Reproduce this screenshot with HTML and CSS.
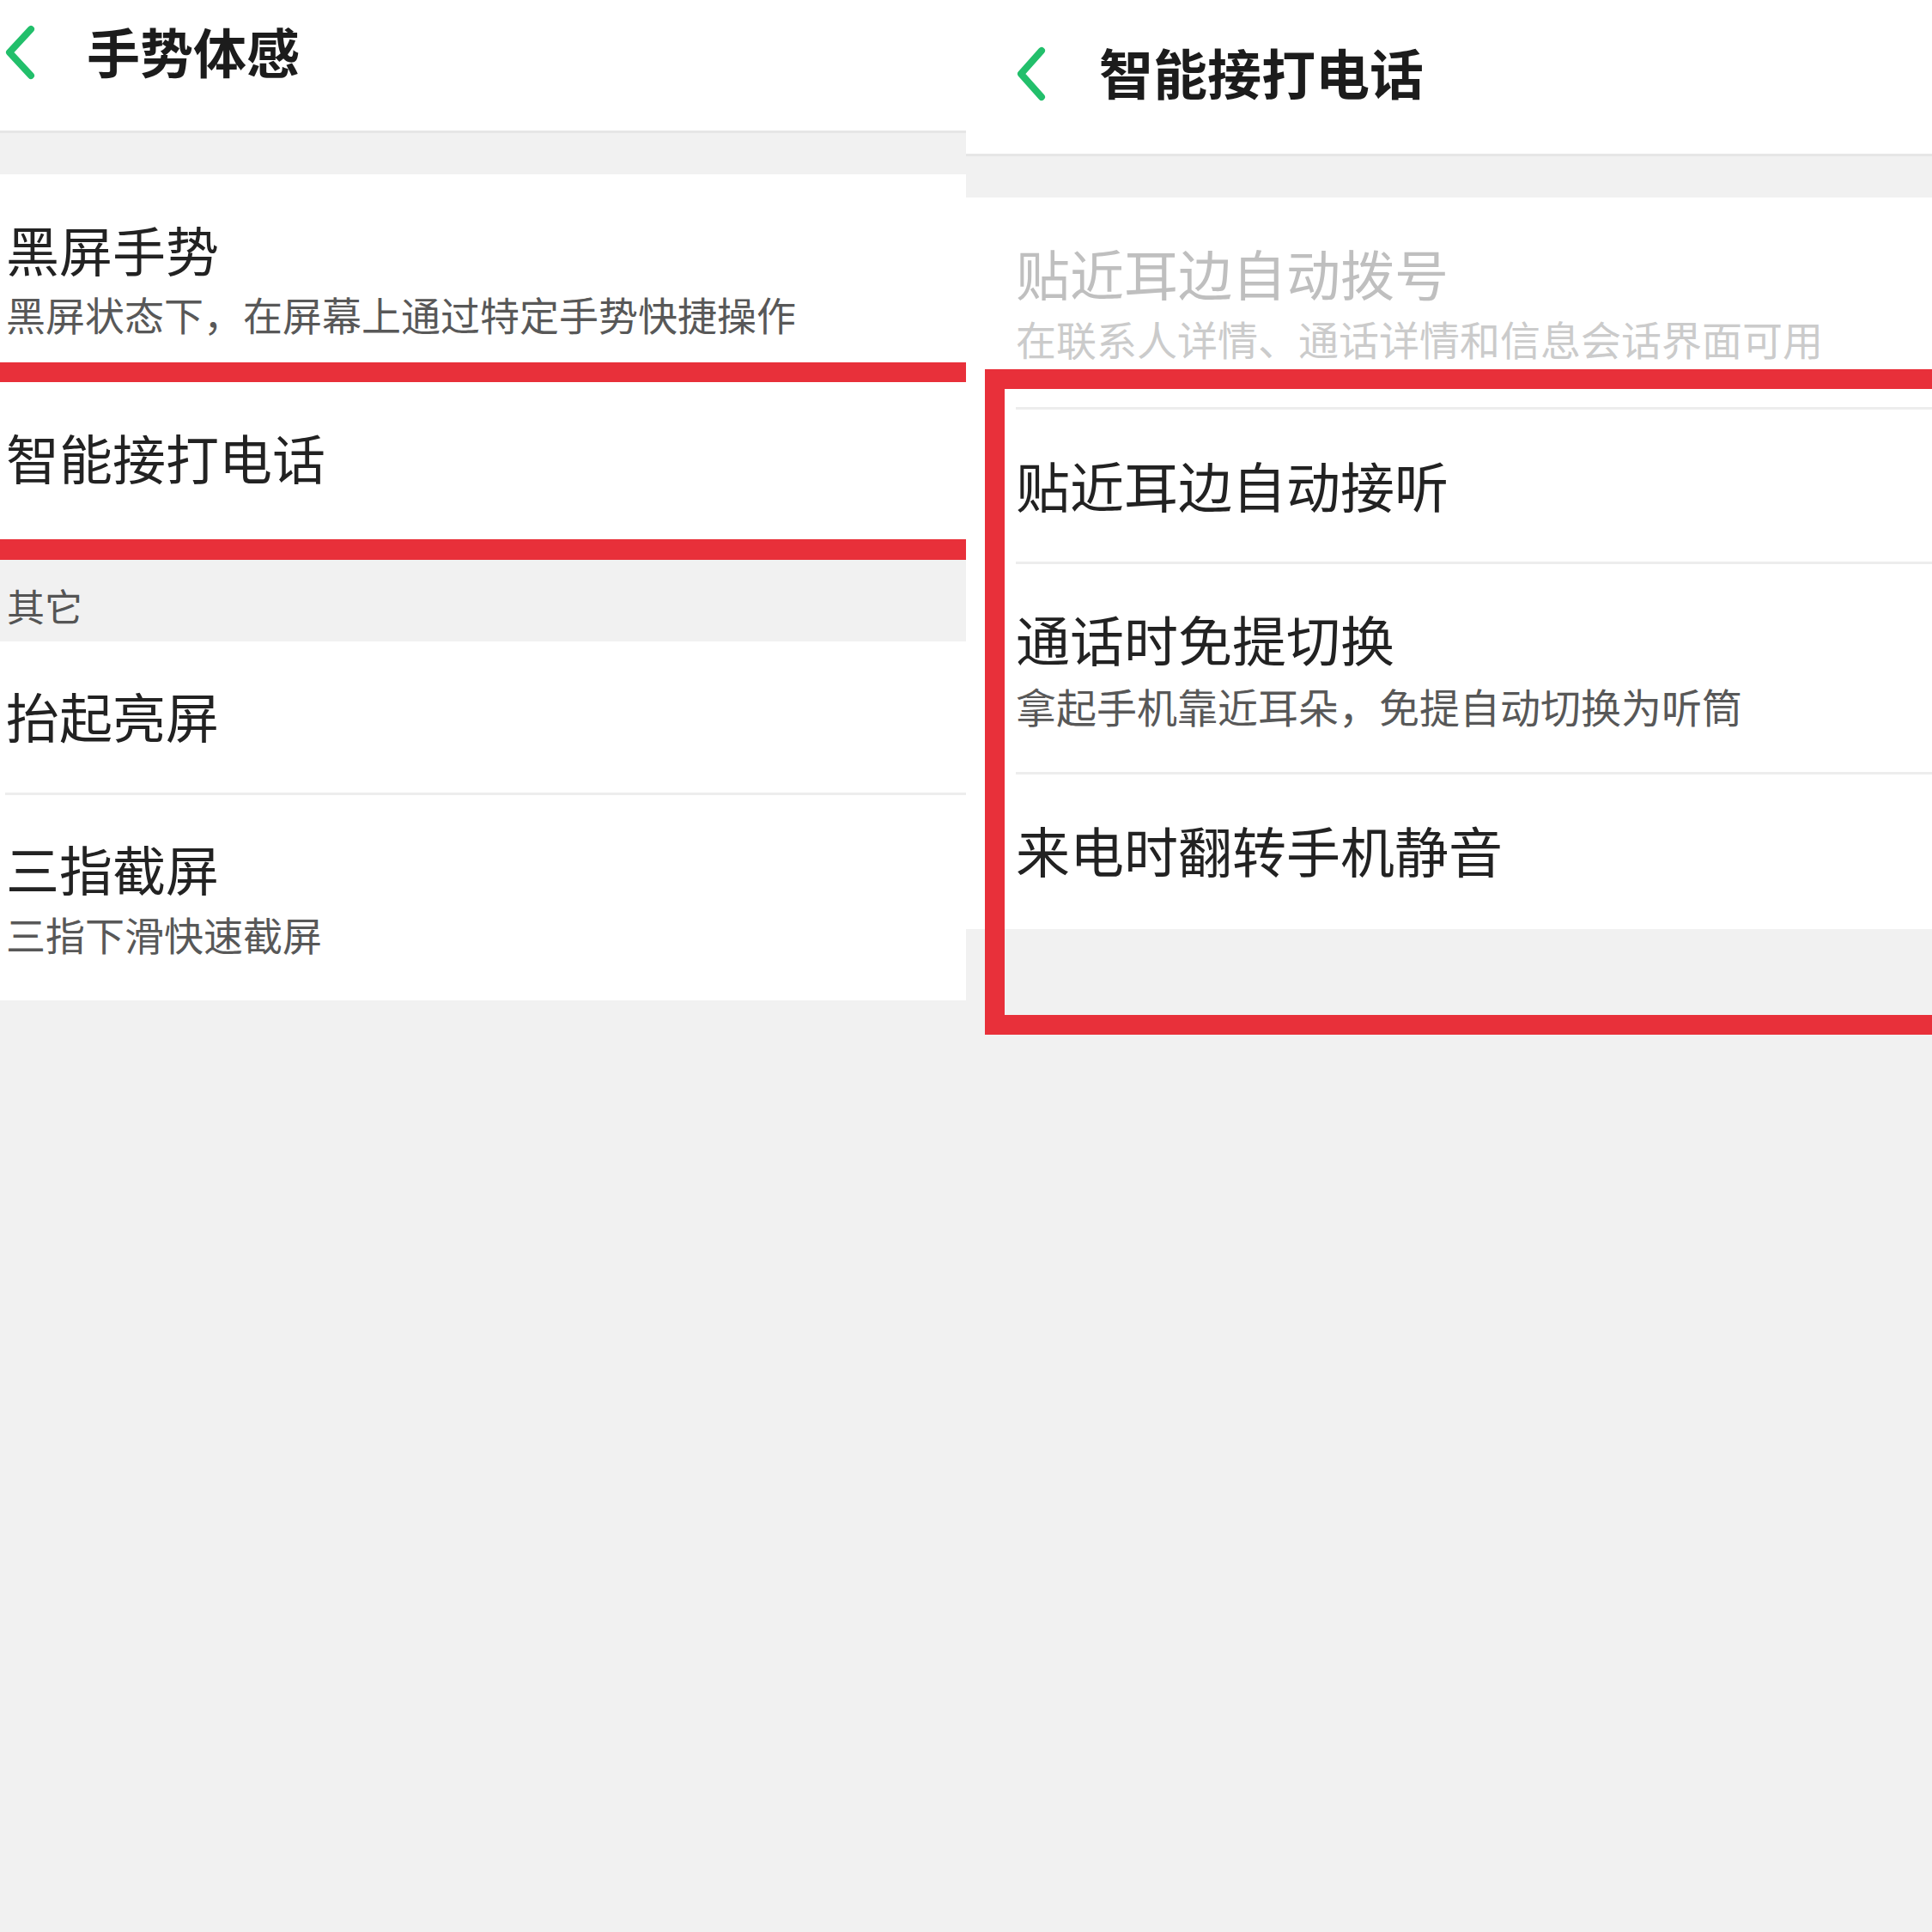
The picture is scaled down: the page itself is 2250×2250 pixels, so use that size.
FILE: index.html
```html
<!DOCTYPE html>
<html lang="zh-CN">
<head>
<meta charset="utf-8">
<title>手势体感 / 智能接打电话</title>
<link rel="stylesheet" href="styles.css">
</head>
<body>
<div class="screens">
  <section class="panel panel-left">
    <header class="topbar topbar-left">
      <svg class="back back-left" width="44" height="100" viewBox="0 0 44 100"><polyline points="36,34 11,61 36,88" /></svg>
      <h1 class="page-title title-left">手势体感</h1>
    </header>
    <div class="gap"></div>

    <div class="row row-l1">
      <div class="row-inner">
        <div class="item-title">黑屏手势</div>
        <div class="item-sub">黑屏状态下，在屏幕上通过特定手势快捷操作</div>
      </div>
    </div>
    <div class="row row-l2 marked">
      <div class="row-inner">
        <div class="item-title">智能接打电话</div>
      </div>
    </div>
    <div class="section-head">其它</div>
    <div class="row row-l3">
      <div class="row-inner sep">
        <div class="item-title">抬起亮屏</div>
      </div>
    </div>
    <div class="row row-l4">
      <div class="row-inner">
        <div class="item-title">三指截屏</div>
        <div class="item-sub">三指下滑快速截屏</div>
      </div>
    </div>
  </section>

  <section class="panel panel-right">
    <header class="topbar topbar-right">
      <svg class="back back-right" width="44" height="140" viewBox="0 0 44 140"><polyline points="32,59 8,86 32,113" /></svg>
      <h1 class="page-title title-right">智能接打电话</h1>
    </header>
    <div class="gap"></div>

    <div class="row rrow rrow-1">
      <div class="row-inner sep">
        <div class="item-title big disabled">贴近耳边自动拨号</div>
        <div class="item-sub wide disabled-sub">在联系人详情、通话详情和信息会话界面可用</div>
      </div>
    </div>
    <div class="row rrow rrow-2">
      <div class="row-inner sep">
        <div class="item-title big">贴近耳边自动接听</div>
      </div>
    </div>
    <div class="row rrow rrow-3">
      <div class="row-inner sep">
        <div class="item-title big">通话时免提切换</div>
        <div class="item-sub wide">拿起手机靠近耳朵，免提自动切换为听筒</div>
      </div>
    </div>
    <div class="row rrow rrow-4">
      <div class="row-inner">
        <div class="item-title big">来电时翻转手机静音</div>
      </div>
    </div>

    <div class="highlight-box"></div>
  </section>
</div>
</body>
</html>
```

FILE: styles.css
```css
html, body {
  margin: 0;
  padding: 0;
}

body {
  width: 2250px;
  height: 2250px;
  overflow: hidden;
  background: #f1f1f1;
  font-family: "Noto Sans CJK SC", "Noto Sans", sans-serif;
  color: #222222;
}

.screens {
  display: flex;
  align-items: flex-start;
  width: 2250px;
}

.panel {
  width: 1125px;
  flex: 0 0 1125px;
  display: flex;
  flex-direction: column;
}

.panel-right {
  position: relative;
  overflow: hidden;
  height: 1300px;
}

/* ---------- top bars ---------- */
.topbar {
  display: flex;
  align-items: flex-start;
  background: #ffffff;
  border-bottom: 3px solid #e6e6e6;
  box-sizing: content-box;
}

.topbar-left {
  height: 152px;
}

.topbar-right {
  height: 179px;
  padding-left: 56px;
}

.back {
  flex: 0 0 auto;
  display: block;
}

.back polyline {
  fill: none;
  stroke: #22bf6b;
  stroke-width: 8;
  stroke-linecap: round;
  stroke-linejoin: round;
}

.page-title {
  margin: 0;
  font-weight: 700;
  color: #1c1c1c;
  white-space: nowrap;
}

.title-left {
  font-size: 62px;
  line-height: 62px;
  margin-left: 57px;
  padding-top: 28px;
}

.title-right {
  font-size: 63px;
  line-height: 63px;
  margin-left: 55px;
  padding-top: 51px;
}

.gap {
  height: 48px;
}

/* ---------- rows ---------- */
.row {
  background: #ffffff;
  box-sizing: border-box;
  padding-left: 7px;
}

.row-inner {
  display: flex;
  flex-direction: column;
  box-sizing: border-box;
  height: 100%;
}

.sep {
  border-bottom: 3px solid #ededed;
}

.item-title {
  font-size: 62px;
  line-height: 62px;
  color: #222222;
  white-space: nowrap;
}

.item-title.big {
  font-size: 63px;
  line-height: 63px;
}

.item-sub {
  font-size: 46px;
  line-height: 46px;
  color: #585858;
  white-space: nowrap;
}

.item-sub.wide {
  font-size: 47px;
  line-height: 47px;
}

.disabled {
  color: #bfbfbf;
}

.disabled-sub {
  color: #cbcbcb;
}

/* left panel rows */
.row-l1 {
  height: 219px;
}
.row-l1 .row-inner {
  padding-top: 56px;
}
.row-l1 .item-sub {
  margin-top: 21px;
}

.marked {
  border-top: 23px solid #e8303a;
  border-bottom: 24px solid #e8303a;
  height: 230px;
}
.row-l2 .row-inner {
  padding-top: 56px;
}

.section-head {
  height: 95px;
  box-sizing: border-box;
  padding-top: 31px;
  padding-left: 8px;
  font-size: 44px;
  line-height: 44px;
  color: #555555;
}

.row-l3 {
  height: 179px;
  padding-left: 6px;
}
.row-l3 .row-inner {
  padding-top: 55px;
  padding-left: 1px;
}

.row-l4 {
  height: 239px;
}
.row-l4 .row-inner {
  padding-top: 54px;
}
.row-l4 .item-sub {
  margin-top: 22px;
}

/* right panel rows */
.rrow {
  padding-left: 58px;
}

.rrow-1 {
  height: 247px;
}
.rrow-1 .row-inner {
  padding-top: 55px;
}
.rrow-1 .item-sub {
  margin-top: 22px;
}

.rrow-2 {
  height: 180px;
}
.rrow-2 .row-inner {
  padding-top: 55px;
}

.rrow-3 {
  height: 245px;
}
.rrow-3 .row-inner {
  padding-top: 54px;
}
.rrow-3 .item-sub {
  margin-top: 24px;
}

.rrow-4 {
  height: 180px;
}
.rrow-4 .row-inner {
  padding-top: 55px;
}

/* annotation overlay */
.highlight-box {
  position: absolute;
  top: 430px;
  left: 22px;
  right: 0;
  height: 775px;
  box-sizing: border-box;
  border: 23px solid #e8303a;
  border-right: none;
  pointer-events: none;
}
```
